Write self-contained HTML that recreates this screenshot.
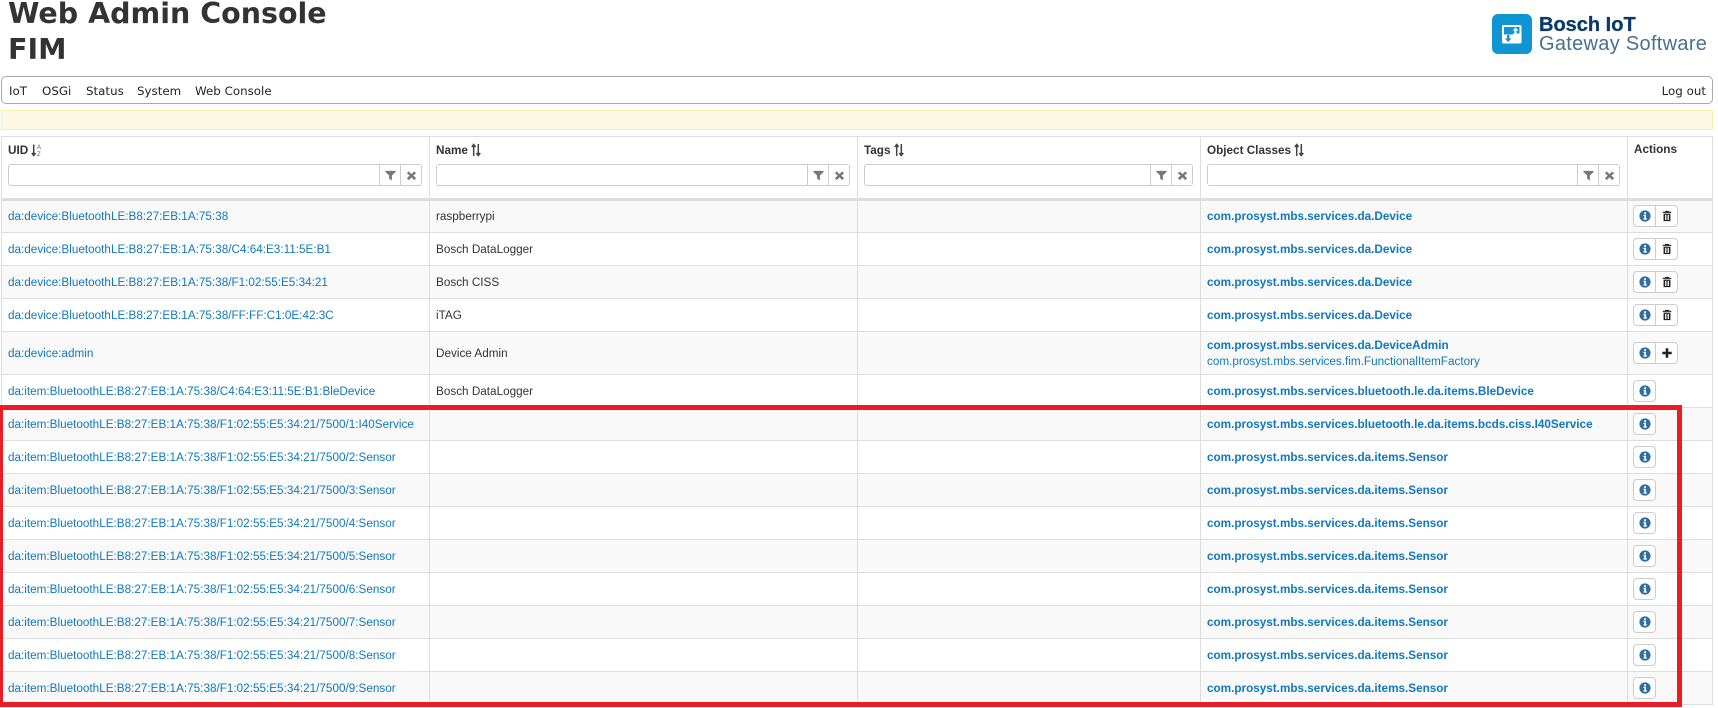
<!DOCTYPE html>
<html><head><meta charset="utf-8"><title>Web Admin Console FIM</title>
<style>
html,body{margin:0;padding:0;background:#fff;}
body{width:1718px;height:708px;overflow:hidden;position:relative;font-family:"Liberation Sans",sans-serif;font-size:12px;color:#333;}
h1{position:absolute;left:8px;top:-4px;margin:0;font:bold 28.5px/36px "DejaVu Sans",sans-serif;color:#333;}
.logo{position:absolute;left:1492px;top:14px;width:40px;height:40px;background:#0f95d3;border-radius:6px;}
.l1,.l2{position:absolute;left:1539px;white-space:nowrap;}
.l1{top:13px;font:bold 20px/24px "Liberation Sans",sans-serif;color:#0b3a66;-webkit-text-stroke:.3px #0b3a66;}
.l2{top:32px;font:20px/24px "Liberation Sans",sans-serif;color:#47708f;letter-spacing:.3px;}
.nav{position:absolute;left:1px;top:76px;width:1710px;height:26px;border:1px solid #aaa;border-radius:5px;font:11.85px/28px "DejaVu Sans",sans-serif;color:#222;}
.nav span{position:absolute;top:0;white-space:nowrap;}
.alert{position:absolute;left:1px;top:110px;width:1710px;height:18px;background:#fcf8e3;border:1px solid #f9eeaa;}
table{position:absolute;left:1px;top:136px;width:1711px;border-collapse:collapse;table-layout:fixed;}
td,th{border:1px solid #ddd;padding:1px 6px 0;box-sizing:border-box;vertical-align:middle;text-align:left;font-size:11.72px;line-height:14px;overflow:hidden;}
th{height:63px;vertical-align:top;padding-top:1px;color:#333;font-weight:bold;border-bottom:3px solid #ddd;white-space:nowrap;position:relative;}
th .t{position:absolute;left:6px;top:6px;}
th svg{vertical-align:-3px;}
tr{height:33px;}
tr.s td{background:#f9f9f9;}
a{color:#1078bd;text-decoration:none;white-space:nowrap;}
b a{font-weight:bold;}
.f{position:absolute;left:6px;right:7px;top:27px;height:22px;border:1px solid #ccc;border-radius:3px;background:#fff;box-sizing:border-box;}
.f i{position:absolute;top:0;bottom:0;width:20px;border-left:1px solid #ccc;}
.f i.a{right:21px;}
.f i.b{right:0;}
.f svg{position:absolute;left:5px;top:5px;}
.g{display:inline-block;height:22px;border:1px solid #ccc;border-radius:4px;background:#fff;box-sizing:border-box;vertical-align:middle;font-size:0;margin-left:-1px;position:relative;top:-1px;}
.g i{display:inline-block;width:21px;height:20px;position:relative;vertical-align:top;}
.g i+i{border-left:1px solid #ccc;}
.g svg{position:absolute;left:5px;top:4px;}
.r{position:absolute;background:#ed1c24;}
</style></head><body>
<svg width="0" height="0" style="position:absolute">
<symbol id="info" viewBox="0 0 14 14"><path fill="#2f6f9f" fill-rule="evenodd" d="M7 .5a6.500 6.500 0 1 0 0 13 6.500 6.500 0 0 0 0-13zM6 2.600h2.200v2H6zM5.200 5.600h3v4.200h1v1.400H5.200V9.800h1V7h-1z"/></symbol>
<symbol id="trash" viewBox="0 0 14 14"><path fill="#222" fill-rule="evenodd" d="M5 1h4l.5 1H12v1.400H2V2h2.500zM3 4.200h8V13H3zM4.700 5.600v6h1v-6zM6.500 5.600v6h1v-6zM8.300 5.600v6h1v-6z"/></symbol>
<symbol id="plus" viewBox="0 0 14 14"><path fill="#222" d="M5.500 1.500h3v4h4v3h-4v4h-3v-4h-4v-3h4z"/></symbol>
<symbol id="fn" viewBox="0 0 12 12"><path fill="#777" d="M.5 1h11v1.200L7.500 6v5.500L4.500 9.500V6L.5 2.200z"/></symbol>
<symbol id="x" viewBox="0 0 12 12"><path fill="#777" d="M3 1.500L6 4.500l3-3L11 3.500l-3 2.500 3 3L9 11 6 8l-3 3-2-2 3-3-3-2.500z"/></symbol>
<symbol id="so" viewBox="0 0 10 14"><path fill="none" stroke="#444" stroke-width="1.500" d="M2.700 13V2M.8 4L2.700 1.500 4.600 4M7.300 1v11M5.400 10l1.900 2.500L9.200 10"/></symbol>
</svg>
<h1>Web Admin Console<br>FIM</h1>
<div class="logo"><svg width="40" height="40" viewBox="0 0 40 40" style="position:absolute;left:0;top:0"><rect x="10" y="11" width="19.500" height="18.500" rx="1.500" fill="#fff"/><path fill="#0f95d3" d="M12 13h15.500v6.500H12z"/><path fill="#fff" d="M23.500 13.500l3 3h-2v3h-2v-3h-2z"/><path fill="#0f95d3" d="M12 19.500h9v1h-9zM15 21h2.500v3.500h2L16.200 28l-3.300-3.500h2.100z"/></svg></div>
<div class="l1">Bosch IoT</div><div class="l2">Gateway Software</div>
<div class="nav"><span style="left:7px">IoT</span><span style="left:40px">OSGi</span><span style="left:84px">Status</span><span style="left:135px">System</span><span style="left:193px">Web Console</span><span style="right:6px">Log out</span></div>
<div class="alert"></div>
<table>
<colgroup><col style="width:428px"><col style="width:428px"><col style="width:343px"><col style="width:427px"><col style="width:85px"></colgroup>
<tr style="height:63px">
<th><span class="t">UID <svg width="13" height="14" viewBox="0 0 13 14"><path fill="none" stroke="#444" stroke-width="1.500" d="M2.700 1.500v11M.8 10l1.900 2.500L4.600 10"/><text x="6" y="6" font-size="6" font-weight="normal" fill="#555" font-family="Liberation Sans">A</text><text x="6" y="13" font-size="6" font-weight="normal" fill="#555" font-family="Liberation Sans">Z</text></svg></span><div class="f"><i class="a"><svg width="11" height="11"><use href="#fn"/></svg></i><i class="b"><svg width="11" height="11"><use href="#x"/></svg></i></div></th>
<th><span class="t">Name <svg width="10" height="14"><use href="#so"/></svg></span><div class="f"><i class="a"><svg width="11" height="11"><use href="#fn"/></svg></i><i class="b"><svg width="11" height="11"><use href="#x"/></svg></i></div></th>
<th><span class="t">Tags <svg width="10" height="14"><use href="#so"/></svg></span><div class="f"><i class="a"><svg width="11" height="11"><use href="#fn"/></svg></i><i class="b"><svg width="11" height="11"><use href="#x"/></svg></i></div></th>
<th><span class="t">Object Classes <svg width="10" height="14"><use href="#so"/></svg></span><div class="f"><i class="a"><svg width="11" height="11"><use href="#fn"/></svg></i><i class="b"><svg width="11" height="11"><use href="#x"/></svg></i></div></th>
<th><span class="t">Actions</span></th>
</tr>
<tr class="s"><td><a>da:device:BluetoothLE:B8:27:EB:1A:75:38</a></td><td>raspberrypi</td><td></td><td><b><a>com.prosyst.mbs.services.da.Device</a></b></td><td><span class="g"><i><svg width="12" height="12"><use href="#info"/></svg></i><i><svg width="12" height="12"><use href="#trash"/></svg></i></span></td></tr>
<tr><td><a>da:device:BluetoothLE:B8:27:EB:1A:75:38/C4:64:E3:11:5E:B1</a></td><td>Bosch DataLogger</td><td></td><td><b><a>com.prosyst.mbs.services.da.Device</a></b></td><td><span class="g"><i><svg width="12" height="12"><use href="#info"/></svg></i><i><svg width="12" height="12"><use href="#trash"/></svg></i></span></td></tr>
<tr class="s"><td><a>da:device:BluetoothLE:B8:27:EB:1A:75:38/F1:02:55:E5:34:21</a></td><td>Bosch CISS</td><td></td><td><b><a>com.prosyst.mbs.services.da.Device</a></b></td><td><span class="g"><i><svg width="12" height="12"><use href="#info"/></svg></i><i><svg width="12" height="12"><use href="#trash"/></svg></i></span></td></tr>
<tr><td><a>da:device:BluetoothLE:B8:27:EB:1A:75:38/FF:FF:C1:0E:42:3C</a></td><td>iTAG</td><td></td><td><b><a>com.prosyst.mbs.services.da.Device</a></b></td><td><span class="g"><i><svg width="12" height="12"><use href="#info"/></svg></i><i><svg width="12" height="12"><use href="#trash"/></svg></i></span></td></tr>
<tr class="s" style="height:43px"><td><a>da:device:admin</a></td><td>Device Admin</td><td></td><td style="line-height:16px"><b><a>com.prosyst.mbs.services.da.DeviceAdmin</a></b><br><a>com.prosyst.mbs.services.fim.FunctionalItemFactory</a></td><td><span class="g"><i><svg width="12" height="12"><use href="#info"/></svg></i><i><svg width="12" height="12"><use href="#plus"/></svg></i></span></td></tr>
<tr><td><a>da:item:BluetoothLE:B8:27:EB:1A:75:38/C4:64:E3:11:5E:B1:BleDevice</a></td><td>Bosch DataLogger</td><td></td><td><b><a>com.prosyst.mbs.services.bluetooth.le.da.items.BleDevice</a></b></td><td><span class="g"><i><svg width="12" height="12"><use href="#info"/></svg></i></span></td></tr>
<tr class="s"><td><a>da:item:BluetoothLE:B8:27:EB:1A:75:38/F1:02:55:E5:34:21/7500/1:I40Service</a></td><td></td><td></td><td><b><a>com.prosyst.mbs.services.bluetooth.le.da.items.bcds.ciss.I40Service</a></b></td><td><span class="g"><i><svg width="12" height="12"><use href="#info"/></svg></i></span></td></tr>
<tr><td><a>da:item:BluetoothLE:B8:27:EB:1A:75:38/F1:02:55:E5:34:21/7500/2:Sensor</a></td><td></td><td></td><td><b><a>com.prosyst.mbs.services.da.items.Sensor</a></b></td><td><span class="g"><i><svg width="12" height="12"><use href="#info"/></svg></i></span></td></tr>
<tr class="s"><td><a>da:item:BluetoothLE:B8:27:EB:1A:75:38/F1:02:55:E5:34:21/7500/3:Sensor</a></td><td></td><td></td><td><b><a>com.prosyst.mbs.services.da.items.Sensor</a></b></td><td><span class="g"><i><svg width="12" height="12"><use href="#info"/></svg></i></span></td></tr>
<tr><td><a>da:item:BluetoothLE:B8:27:EB:1A:75:38/F1:02:55:E5:34:21/7500/4:Sensor</a></td><td></td><td></td><td><b><a>com.prosyst.mbs.services.da.items.Sensor</a></b></td><td><span class="g"><i><svg width="12" height="12"><use href="#info"/></svg></i></span></td></tr>
<tr class="s"><td><a>da:item:BluetoothLE:B8:27:EB:1A:75:38/F1:02:55:E5:34:21/7500/5:Sensor</a></td><td></td><td></td><td><b><a>com.prosyst.mbs.services.da.items.Sensor</a></b></td><td><span class="g"><i><svg width="12" height="12"><use href="#info"/></svg></i></span></td></tr>
<tr><td><a>da:item:BluetoothLE:B8:27:EB:1A:75:38/F1:02:55:E5:34:21/7500/6:Sensor</a></td><td></td><td></td><td><b><a>com.prosyst.mbs.services.da.items.Sensor</a></b></td><td><span class="g"><i><svg width="12" height="12"><use href="#info"/></svg></i></span></td></tr>
<tr class="s"><td><a>da:item:BluetoothLE:B8:27:EB:1A:75:38/F1:02:55:E5:34:21/7500/7:Sensor</a></td><td></td><td></td><td><b><a>com.prosyst.mbs.services.da.items.Sensor</a></b></td><td><span class="g"><i><svg width="12" height="12"><use href="#info"/></svg></i></span></td></tr>
<tr><td><a>da:item:BluetoothLE:B8:27:EB:1A:75:38/F1:02:55:E5:34:21/7500/8:Sensor</a></td><td></td><td></td><td><b><a>com.prosyst.mbs.services.da.items.Sensor</a></b></td><td><span class="g"><i><svg width="12" height="12"><use href="#info"/></svg></i></span></td></tr>
<tr class="s"><td><a>da:item:BluetoothLE:B8:27:EB:1A:75:38/F1:02:55:E5:34:21/7500/9:Sensor</a></td><td></td><td></td><td><b><a>com.prosyst.mbs.services.da.items.Sensor</a></b></td><td><span class="g"><i><svg width="12" height="12"><use href="#info"/></svg></i></span></td></tr>
</table>
<div class="r" style="left:0;top:405px;width:1682px;height:5px"></div>
<div class="r" style="left:0;top:405px;width:3px;height:302px"></div>
<div class="r" style="left:1677px;top:405px;width:5px;height:302px"></div>
<div class="r" style="left:0;top:702px;width:1682px;height:5px"></div>
</body></html>
